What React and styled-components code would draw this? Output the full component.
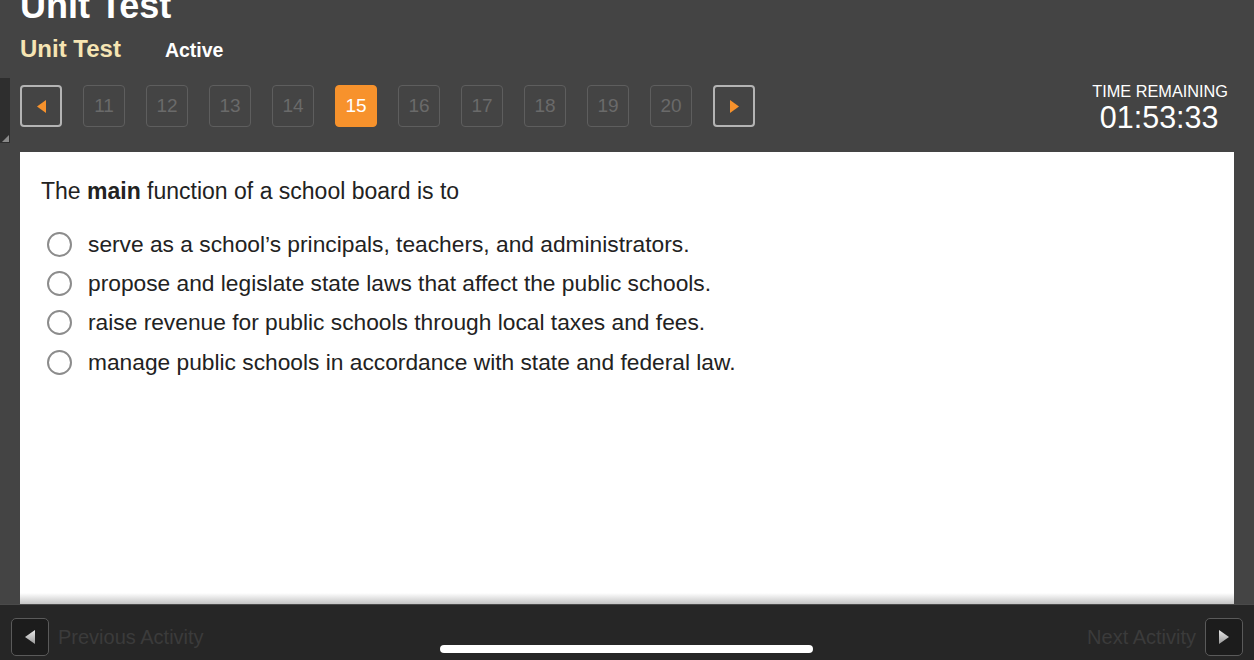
import React from 'react';
import styled, { createGlobalStyle } from 'styled-components';

const GlobalStyle = createGlobalStyle`
  html, body {
    margin: 0;
    padding: 0;
    background: #444;
    overflow: hidden;
  }
  * { box-sizing: border-box; }
`;

const Page = styled.div`
  position: relative;
  width: 1254px;
  height: 660px;
  display: flex;
  flex-direction: column;
  background: #444444;
  font-family: "Liberation Sans", Arial, Helvetica, sans-serif;
  overflow: hidden;
`;

const Top = styled.div`
  height: 152px;
  display: flex;
  flex-direction: column;
  flex-shrink: 0;
`;

const BigTitle = styled.div`
  margin: -12px 0 0 20px;
  font-size: 36px;
  line-height: 35px;
  font-weight: bold;
  color: #fff;
`;

const SubTitle = styled.div`
  margin: 12px 0 0 20px;
  height: 28px;
  line-height: 28px;
  white-space: nowrap;
`;

const TestName = styled.span`
  font-size: 24px;
  font-weight: bold;
  color: #f6e5b3;
`;

const Status = styled.span`
  margin-left: 44px;
  font-size: 19.5px;
  font-weight: bold;
  color: #fff;
`;

const NavBar = styled.div`
  flex: 1;
  display: flex;
  align-items: flex-start;
  padding: 19px 26px 0 20px;
`;

const Pager = styled.div`
  display: flex;
  gap: 21px;
  margin-top: 3px;
`;

const PageButton = styled.div`
  width: 42px;
  height: 42px;
  border-radius: 4px;
  display: flex;
  align-items: center;
  justify-content: center;
  font-size: 19px;
  border: ${p => (p.$arrow ? '2px solid #b4b4b4' : p.$current ? '1.5px solid #f7922c' : '1.5px solid #5e5e5e')};
  background: ${p => (p.$current ? '#f7922c' : 'transparent')};
  color: ${p => (p.$current ? '#fff' : '#6a6a6a')};
`;

const Timer = styled.div`
  margin-left: auto;
  display: flex;
  flex-direction: column;
  align-items: center;
  color: #fff;
`;

const TimerLabel = styled.div`
  font-size: 16.3px;
  line-height: 18px;
`;

const TimerValue = styled.div`
  font-size: 30.5px;
  line-height: 32px;
  margin-top: 1px;
  margin-right: 2px;
`;

const SideTab = styled.div`
  position: absolute;
  left: 0;
  top: 78px;
  width: 10px;
  height: 65px;
  background: #2e2e2e;

  &::after {
    content: '';
    position: absolute;
    right: 1px;
    bottom: 1px;
    border-style: solid;
    border-width: 0 0 7px 7px;
    border-color: transparent transparent #8a8a8a transparent;
  }
`;

const Panel = styled.div`
  flex: 1;
  margin: 0 20px;
  padding: 26px 21px 0;
  background: linear-gradient(to bottom, #fff calc(100% - 11px), #c4c4c4);
  color: #222;
`;

const Question = styled.div`
  font-size: 23px;
  line-height: 27.6px;
  margin-bottom: 19px;
`;

const Options = styled.div`
  display: flex;
  flex-direction: column;
`;

const Option = styled.label`
  display: flex;
  align-items: center;
  height: 39.3px;
  font-size: 22.75px;
  line-height: 39px;
  white-space: nowrap;
`;

const Radio = styled.span`
  width: 25px;
  height: 25px;
  margin: 0 16px 0 6px;
  border-radius: 50%;
  border: 2px solid #8c8c8c;
  background: #fff;
  flex-shrink: 0;
`;

const Footer = styled.div`
  height: 56px;
  flex-shrink: 0;
  display: flex;
  align-items: flex-start;
  justify-content: space-between;
  padding: 13px 11px 0;
  background: #262626;
  border-top: 1px solid #4a4a4a;
`;

const ActivityLink = styled.div`
  display: flex;
  align-items: center;
  gap: 9px;
  font-size: 20px;
  line-height: 24px;
  color: #3b3b3b;
`;

const ActivityButton = styled.div`
  width: 38px;
  height: 38px;
  border-radius: 5px;
  border: 1.5px solid #5a5a5a;
  background: #1c1c1c;
  display: flex;
  align-items: center;
  justify-content: center;
`;

const HomeIndicator = styled.div`
  position: absolute;
  left: 440px;
  top: 645px;
  width: 373px;
  height: 8px;
  border-radius: 4px;
  background: #fff;
`;

const Arrow = ({ dir, color, w = 9, h = 13 }) => (
  <svg width={w} height={h} viewBox={`0 0 ${w} ${h}`}>
    {dir === 'left' ? (
      <polygon points={`${w},0 0,${h / 2} ${w},${h}`} fill={color} />
    ) : (
      <polygon points={`0,0 ${w},${h / 2} 0,${h}`} fill={color} />
    )}
  </svg>
);

const SilverArrow = ({ dir }) => (
  <svg width="10" height="14" viewBox="0 0 10 14">
    <defs>
      <linearGradient id={`silver-${dir}`} x1="0" y1="0" x2="0" y2="1">
        <stop offset="0" stopColor="#e8e8e8" />
        <stop offset="1" stopColor="#9a9a9a" />
      </linearGradient>
    </defs>
    {dir === 'left' ? (
      <polygon points="10,0 0,7 10,14" fill={`url(#silver-${dir})`} />
    ) : (
      <polygon points="0,0 10,7 0,14" fill={`url(#silver-${dir})`} />
    )}
  </svg>
);

const pages = [11, 12, 13, 14, 15, 16, 17, 18, 19, 20];

const answers = [
  'serve as a school\u2019s principals, teachers, and administrators.',
  'propose and legislate state laws that affect the public schools.',
  'raise revenue for public schools through local taxes and fees.',
  'manage public schools in accordance with state and federal law.',
];

export default function App() {
  return (
    <Page>
      <GlobalStyle />
      <Top>
        <BigTitle>Unit Test</BigTitle>
        <SubTitle>
          <TestName>Unit Test</TestName>
          <Status>Active</Status>
        </SubTitle>
        <NavBar>
          <Pager>
            <PageButton $arrow>
              <Arrow dir="left" color="#f7922c" />
            </PageButton>
            {pages.map(n => (
              <PageButton key={n} $current={n === 15}>{n}</PageButton>
            ))}
            <PageButton $arrow>
              <Arrow dir="right" color="#f7922c" />
            </PageButton>
          </Pager>
          <Timer>
            <TimerLabel>TIME REMAINING</TimerLabel>
            <TimerValue>01:53:33</TimerValue>
          </Timer>
        </NavBar>
      </Top>
      <SideTab />
      <Panel>
        <Question>
          The <b>main</b> function of a school board is to
        </Question>
        <Options>
          {answers.map(a => (
            <Option key={a}>
              <Radio />
              {a}
            </Option>
          ))}
        </Options>
      </Panel>
      <Footer>
        <ActivityLink>
          <ActivityButton>
            <SilverArrow dir="left" />
          </ActivityButton>
          Previous Activity
        </ActivityLink>
        <ActivityLink>
          Next Activity
          <ActivityButton>
            <SilverArrow dir="right" />
          </ActivityButton>
        </ActivityLink>
      </Footer>
      <HomeIndicator />
    </Page>
  );
}
